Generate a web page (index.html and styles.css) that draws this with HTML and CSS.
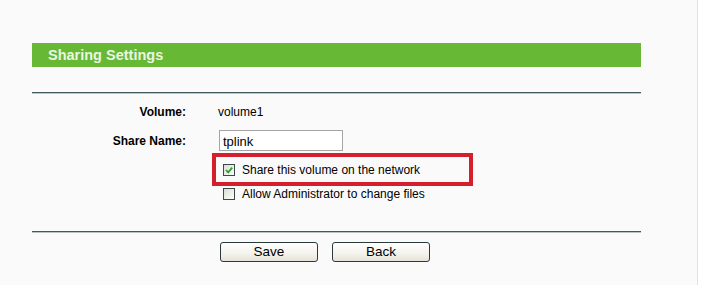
FILE: index.html
```html
<!DOCTYPE html>
<html>
<head>
<meta charset="utf-8">
<link rel="stylesheet" href="styles.css">
</head>
<body>
<div class="page">
  <div class="panel">
    <div class="header">Sharing Settings</div>
    <div class="rule rule-top"></div>
    <div class="row row-volume">
      <div class="label">Volume:</div>
      <div class="value">volume1</div>
    </div>
    <div class="row row-name">
      <div class="label">Share Name:</div>
      <div class="value"><input class="text" type="text" value="tplink"></div>
    </div>
    <div class="row row-share">
      <div class="label"></div>
      <div class="value">
        <div class="highlight">
          <span class="check checked"><svg viewBox="0 0 10 10" width="10" height="10"><path d="M2 5 L4.2 7.3 L8.2 2.6" fill="none" stroke="#2aa02a" stroke-width="1.8"/></svg></span>
          <span class="opt">Share this volume on the network</span>
        </div>
      </div>
    </div>
    <div class="row row-admin">
      <div class="label"></div>
      <div class="value">
        <div class="plain">
          <span class="check"></span>
          <span class="opt">Allow Administrator to change files</span>
        </div>
      </div>
    </div>
    <div class="rule rule-bottom"></div>
    <div class="buttons">
      <button class="btn">Save</button>
      <button class="btn">Back</button>
    </div>
  </div>
</div>
</body>
</html>
```
FILE: styles.css
```css
html, body {
  margin: 0;
  padding: 0;
  background: #ffffff;
}
body {
  font-family: "Liberation Sans", Arial, sans-serif;
  color: #000;
  width: 702px;
  height: 285px;
  overflow: hidden;
}
.page {
  width: 697px;
  height: 285px;
  background: #fafafa;
  border-right: 1px solid #e4e4d2;
}
.panel {
  padding-top: 43px;
  margin-left: 32px;
  width: 609px;
}
.header {
  height: 24px;
  background: #67b835;
  color: #eaf6e2;
  font-weight: bold;
  font-size: 14.5px;
  line-height: 24px;
  padding-left: 16px;
}
.rule {
  height: 1px;
  background: #3f5c5a;
  border-bottom: 1px solid #b9c6c2;
}
.rule-top {
  margin-top: 25px;
}
.row {
  display: flex;
  align-items: center;
}
.label {
  width: 154px;
  text-align: right;
  font-weight: bold;
  font-size: 12px;
}
.value {
  margin-left: 32px;
  font-size: 12px;
}
.row-volume {
  margin-top: 8px;
  height: 20px;
}
.row-name {
  margin-top: 7px;
  height: 23px;
}
.text {
  box-sizing: border-box;
  width: 124px;
  height: 21px;
  margin: 0 0 0 1px;
  border: 1px solid #a5a5a5;
  background: #fff;
  font-family: "Liberation Sans", Arial, sans-serif;
  font-size: 13px;
  padding: 2px 3px 0;
  color: #000;
}
.row-share {
  margin-top: 1px;
}
.highlight {
  box-sizing: border-box;
  width: 261px;
  height: 33px;
  margin-left: -6px;
  border: 4px solid #d4202e;
  display: flex;
  align-items: center;
  padding-left: 7px;
}
.plain {
  display: flex;
  align-items: center;
  height: 15px;
  padding-left: 5px;
}
.row-admin {
  margin-top: 0;
}
.check {
  box-sizing: border-box;
  width: 12px;
  height: 12px;
  border: 1px solid #3a4a48;
  background: linear-gradient(135deg, #dcdcd4 0%, #f4f4f0 70%, #ffffff 100%);
  display: inline-flex;
  align-items: center;
  justify-content: center;
  margin-right: 7px;
}
.opt {
  font-size: 12px;
}
.rule-bottom {
  margin-top: 30px;
}
.buttons {
  display: flex;
  gap: 14px;
  padding-left: 188px;
  margin-top: 9px;
}
.btn {
  box-sizing: border-box;
  width: 98px;
  height: 20px;
  border: 1px solid #2b3a3a;
  border-radius: 3px;
  background: linear-gradient(#ffffff 0%, #f4f2ec 60%, #e6e2d8 100%);
  font-family: "Liberation Sans", Arial, sans-serif;
  font-size: 13.5px;
  color: #000;
  padding: 0;
  line-height: 18px;
}
```
